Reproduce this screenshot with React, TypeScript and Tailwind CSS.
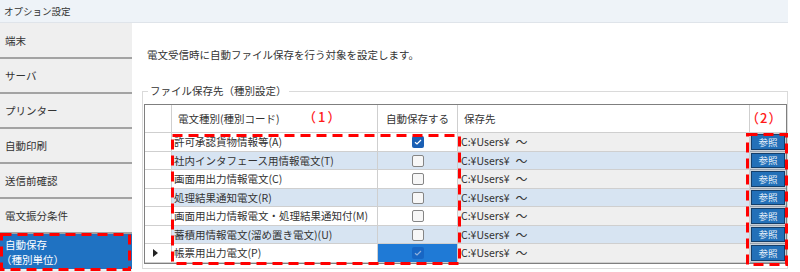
import { Fragment } from "react";

interface Row {
  name: string;
  checked: boolean;
  current?: boolean;
}

const menu = ["端末", "サーバ", "プリンター", "自動印刷", "送信前確認", "電文振分条件"];

const rows: Row[] = [
  { name: "許可承認貨物情報等(A)", checked: true },
  { name: "社内インタフェース用情報電文(T)", checked: false },
  { name: "画面用出力情報電文(C)", checked: false },
  { name: "処理結果通知電文(R)", checked: false },
  { name: "画面用出力情報電文・処理結果通知付(M)", checked: false },
  { name: "蓄積用情報電文(溜め置き電文)(U)", checked: false },
  { name: "帳票用出力電文(P)", checked: true, current: true },
];

const CheckBox = ({ on, dim }: { on: boolean; dim?: boolean }) => {
  if (!on) {
    return <span className="h-[12px] w-[12px] rounded-[2px] border border-[#858585] bg-[#f7f7f7]" />;
  }
  return (
    <span
      className={`flex h-[12px] w-[12px] items-center justify-center rounded-[2px] ${
        dim ? "bg-[#1766c4]" : "bg-[#1a5fb4]"
      }`}
    >
      <svg width="8" height="6" viewBox="0 0 8 6">
        <path d="M1 3.2l2 1.8 4-4" stroke={dim ? "#8fb0dc" : "#ffffff"} strokeWidth="1.2" fill="none" />
      </svg>
    </span>
  );
};

// 赤い破線の枠（注記）
const DashBox = ({ className, w, h }: { className: string; w: number; h: number }) => (
  <svg className={`absolute ${className}`} width={w} height={h}>
    <rect
      x="1.5"
      y="1.5"
      width={w - 3}
      height={h - 3}
      fill="none"
      stroke="#ff0000"
      strokeWidth="3"
      strokeDasharray="10 6"
    />
  </svg>
);

const App = () => {
  return (
    <div className="relative h-[272px] w-[800px] overflow-hidden bg-white font-[family-name:'Noto_Sans_CJK_JP','Noto_Sans',sans-serif] text-[#333]">
      <div className="flex h-full w-[788px] flex-col">
        {/* タイトルバー */}
        <div className="flex h-[23px] shrink-0 items-center border-b border-[#dfe4ea] bg-[#eef3f8] pl-[4px] text-[9.5px] text-[#333]">
          オプション設定
        </div>

        <div className="flex min-h-0 flex-1">
          {/* 左メニュー */}
          <div className="flex w-[132px] shrink-0 flex-col bg-[#efefef] pt-[1px] text-[10.5px]">
            {menu.map((m) => (
              <div key={m} className="flex h-[35px] items-center border-b-2 border-[#a3a3a3] pl-[5px]">
                {m}
              </div>
            ))}
            <div className="flex h-[35px] flex-col justify-center bg-[#1f72c2] pl-[5px] leading-[15px] text-white">
              <span>自動保存</span>
              <span className="-ml-[4px]">（種別単位）</span>
            </div>
          </div>

          {/* 内容 */}
          <div className="flex-1 bg-white pl-[10px] pt-[24px]">
            <p className="pl-[5px] text-[10.5px] leading-[16px]">
              電文受信時に自動ファイル保存を行う対象を設定します。
            </p>

            <fieldset className="mt-[20px] border border-[#dadada] pb-[4px]">
              <legend className="ml-[5px] px-[2px] text-[10.5px] leading-[16px]">ファイル保存先（種別設定）</legend>
              <div className="ml-[1px] mt-[5px] border border-[#7f7f7f] text-[10.5px]">
                <div className="grid grid-cols-[27px_206px_80px_292px_36px]">
                  {/* 見出し */}
                  <div className="h-[28px] border-b border-r border-[#cfcfcf]" />
                  <div className="flex h-[28px] items-center border-b border-r border-[#cfcfcf] pl-[6px]">
                    電文種別(種別コード)
                  </div>
                  <div className="flex h-[28px] items-center justify-center border-b border-r border-[#cfcfcf]">
                    自動保存する
                  </div>
                  <div className="flex h-[28px] items-center border-b border-r border-[#cfcfcf] pl-[6px]">保存先</div>
                  <div className="h-[28px] border-b border-[#cfcfcf]" />

                  {rows.map((r, i) => {
                    const even = i % 2 === 1;
                    const h = i % 2 === 0 ? "h-[19px]" : "h-[18px]";
                    return (
                      <Fragment key={r.name}>
                        <div className={`${h} flex items-center border-b border-r border-[#cfcfcf] bg-white pl-[8px]`}>
                          {r.current && (
                            <svg width="5" height="8" viewBox="0 0 5 8">
                              <path d="M0 0l5 4-5 4z" fill="#222" />
                            </svg>
                          )}
                        </div>
                        <div
                          className={`${h} flex items-center overflow-hidden whitespace-nowrap border-b border-r border-[#cfcfcf] pl-[2px] ${
                            even ? "bg-[#d7e4f2]" : "bg-white"
                          }`}
                        >
                          {r.name}
                        </div>
                        <div
                          className={`${h} flex items-center justify-center border-b border-r border-[#cfcfcf] ${
                            r.current ? "bg-[#1f7ad6]" : even ? "bg-[#d7e4f2]" : "bg-white"
                          }`}
                        >
                          <CheckBox on={r.checked} dim={r.current} />
                        </div>
                        <div
                          className={`${h} flex items-center gap-[6px] border-b border-r border-[#cfcfcf] pl-[3px] ${
                            even ? "bg-[#d7e4f2]" : "bg-[#efefef]"
                          }`}
                        >
                          <span>C:¥Users¥</span>
                          <span className="text-[12px]">〜</span>
                        </div>
                        <div className={`${h} border-b border-[#9aa4b0] bg-[#c9d0d8] p-[1px]`}>
                          <button className="flex h-full w-full items-center justify-center border border-[#153f6a] bg-[#2370b8] text-[9.5px] text-[#e8f1fb]">
                            参照
                          </button>
                        </div>
                      </Fragment>
                    );
                  })}
                </div>
              </div>
            </fieldset>
          </div>
        </div>
      </div>

      {/* 注記 */}
      <span className="absolute left-[303px] top-[107px] text-[13px] font-medium leading-[20px] tracking-[2px] text-[#ff1a1a]">
        （1）
      </span>
      <span className="absolute left-[746px] top-[108px] text-[13px] font-medium leading-[20px] tracking-[1px] text-[#ff1a1a]">
        （2）
      </span>
      <DashBox className="left-[171px] top-[134px]" w={290} h={131} />
      <DashBox className="left-[746px] top-[133px]" w={42} h={133} />
      <DashBox className="left-0 top-[233px]" w={131} h={38} />
    </div>
  );
};

export default App;
